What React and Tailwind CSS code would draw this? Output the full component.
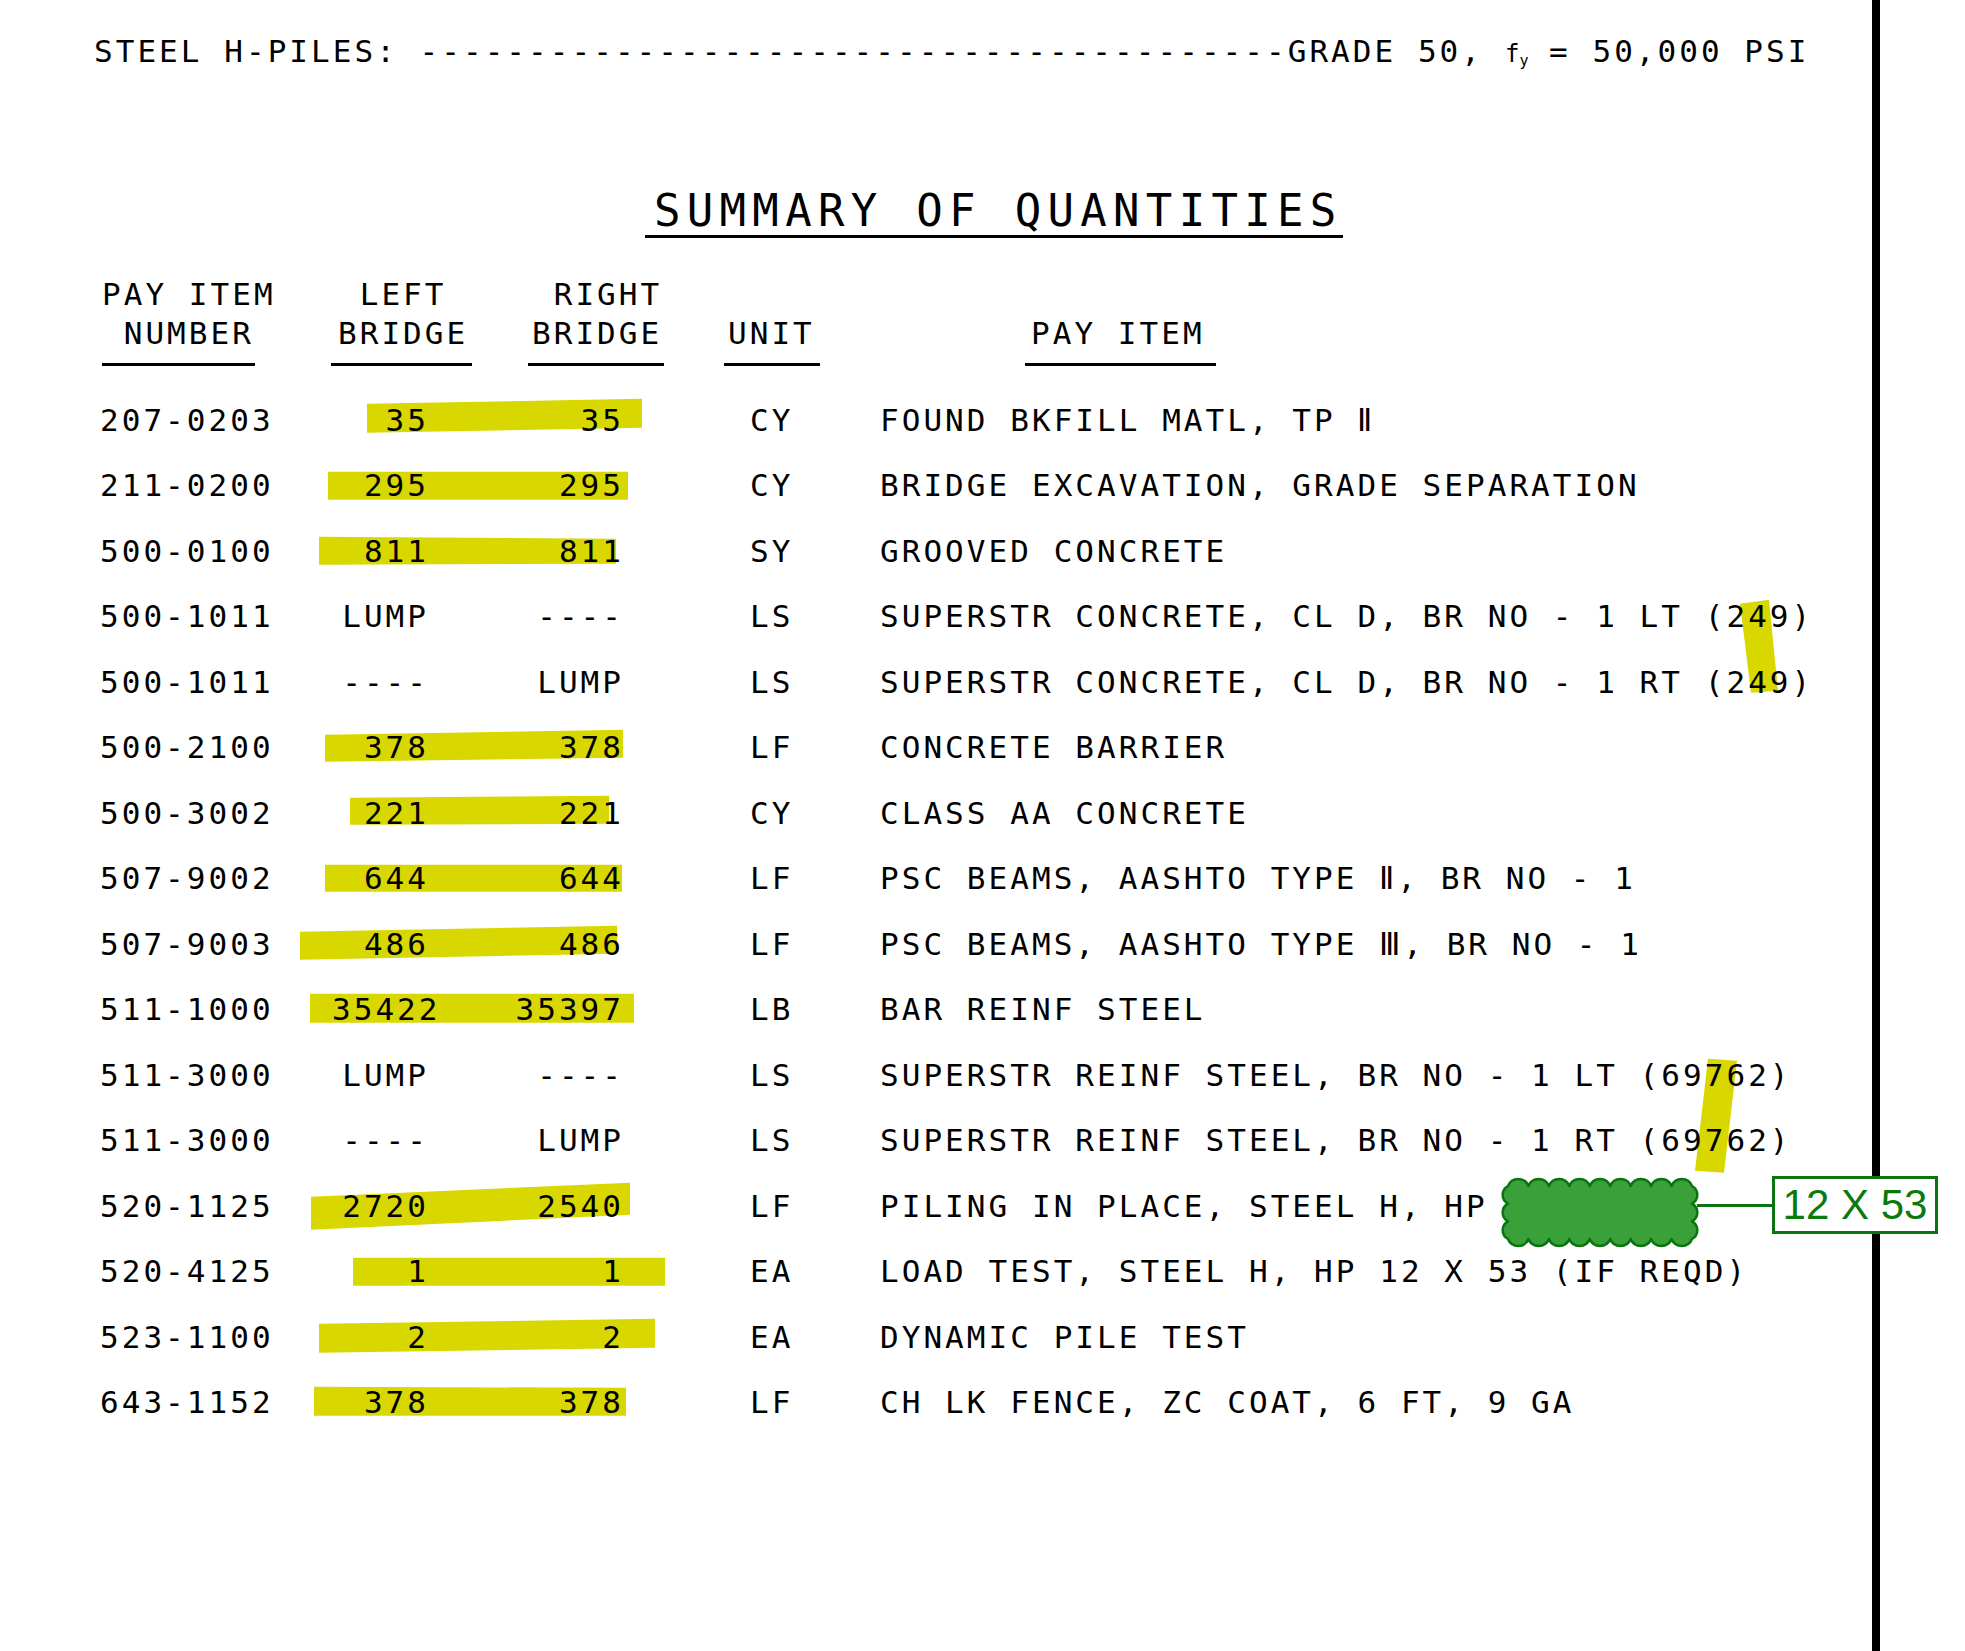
import React from "react";

const rows = [
  ["207-0203", "35", "35", "CY", "FOUND BKFILL MATL, TP Ⅱ"],
  ["211-0200", "295", "295", "CY", "BRIDGE EXCAVATION, GRADE SEPARATION"],
  ["500-0100", "811", "811", "SY", "GROOVED CONCRETE"],
  ["500-1011", "LUMP", "----", "LS", "SUPERSTR CONCRETE, CL D, BR NO - 1 LT (249)"],
  ["500-1011", "----", "LUMP", "LS", "SUPERSTR CONCRETE, CL D, BR NO - 1 RT (249)"],
  ["500-2100", "378", "378", "LF", "CONCRETE BARRIER"],
  ["500-3002", "221", "221", "CY", "CLASS AA CONCRETE"],
  ["507-9002", "644", "644", "LF", "PSC BEAMS, AASHTO TYPE Ⅱ, BR NO - 1"],
  ["507-9003", "486", "486", "LF", "PSC BEAMS, AASHTO TYPE Ⅲ, BR NO - 1"],
  ["511-1000", "35422", "35397", "LB", "BAR REINF STEEL"],
  ["511-3000", "LUMP", "----", "LS", "SUPERSTR REINF STEEL, BR NO - 1 LT (69762)"],
  ["511-3000", "----", "LUMP", "LS", "SUPERSTR REINF STEEL, BR NO - 1 RT (69762)"],
  ["520-1125", "2720", "2540", "LF", "PILING IN PLACE, STEEL H, HP 12 X 53"],
  ["520-4125", "1", "1", "EA", "LOAD TEST, STEEL H, HP 12 X 53 (IF REQD)"],
  ["523-1100", "2", "2", "EA", "DYNAMIC PILE TEST"],
  ["643-1152", "378", "378", "LF", "CH LK FENCE, ZC COAT, 6 FT, 9 GA"],
];

// highlighter marks, x in page px, y offset from the row's middle (row is 65.5 tall)
// [x1, x2, topLeft, topRight, bottomRight, bottomLeft]
const marks = {
  0: [367, 642, -16, -21, 8, 13],
  1: [328, 628, -14, -14, 14, 14],
  2: [319, 616, -14, -12, 13, 14],
  5: [325, 623, -13, -18, 10, 14],
  6: [350, 609, -15, -17, 11, 12],
  7: [325, 622, -14, -14, 13, 13],
  8: [300, 617, -12, -18, 10, 16],
  9: [310, 634, -16, -16, 13, 13],
  12: [311, 630, -9, -23, 9, 24],
  13: [353, 665, -14, -14, 14, 14],
  14: [319, 655, -13, -18, 11, 16],
  15: [314, 626, -16, -15, 13, 13],
};

// slanted strokes that run down across two rows
const strokes = {
  3: "1740,-13 1769,-17 1778,74 1751,76",
  10: "1708,-16 1737,-14 1724,98 1695,96",
};

const MID = 32.75;

function cloudPath(x0, y0, x1, y1, nx, ny, rh, rv) {
  const dx = (x1 - x0) / nx;
  const dy = (y1 - y0) / ny;
  let d = `M${x0},${y0}`;
  for (let i = 1; i <= nx; i++) d += ` A${rh},${rh} 0 0 1 ${x0 + dx * i},${y0}`;
  for (let j = 1; j <= ny; j++) d += ` A${rv},${rv} 0 0 1 ${x1},${y0 + dy * j}`;
  for (let i = 1; i <= nx; i++) d += ` A${rh},${rh} 0 0 1 ${x1 - dx * i},${y1}`;
  for (let j = 1; j <= ny; j++) d += ` A${rv},${rv} 0 0 1 ${x0},${y1 - dy * j}`;
  return d + " Z";
}

const Callout = () => (
  <>
    <svg className="absolute left-[1500px] top-[4px]" width="200" height="71" viewBox="0 0 200 71">
      <path d={cloudPath(8, 9, 192, 62, 9, 3, 11, 10)} fill="#3aa13a" stroke="#0a7410" strokeWidth="2.5" strokeLinejoin="round" />
    </svg>
    <div className="absolute left-[1697px] top-[31px] h-[3px] w-[76px] bg-[#0a7410]" />
    <div className="absolute left-[1772px] top-[3px] flex h-[58px] w-[166px] items-center justify-center border-[3px] border-[#0a7410] bg-white font-['Liberation_Sans',Arial,sans-serif] text-[42px] leading-none tracking-normal text-[#0a7a0a]">
      12 X 53
    </div>
  </>
);

function Row({ r, i }) {
  const m = marks[i];
  return (
    <div className="relative grid h-[65.5px] grid-cols-[232px_97px_195px_256px_1fr] items-center pl-[100px]">
      <svg className="absolute left-0 top-0 overflow-visible" width="1" height="1">
        {m && (
          <polygon
            fill="#d8d800"
            points={`${m[0]},${MID + m[2]} ${m[1]},${MID + m[3]} ${m[1]},${MID + m[4]} ${m[0]},${MID + m[5]}`}
          />
        )}
        {strokes[i] && (
          <polygon
            fill="#d8d800"
            points={strokes[i]
              .split(" ")
              .map((p) => {
                const [x, y] = p.split(",").map(Number);
                return `${x},${MID + y}`;
              })
              .join(" ")}
          />
        )}
      </svg>
      <span className="relative">{r[0]}</span>
      <span className="relative text-right">{r[1]}</span>
      <span className="relative text-right">{r[2]}</span>
      <span className="relative pl-[126px]">{r[3]}</span>
      <span className="relative">{r[4]}</span>
      {i === 12 && <Callout />}
    </div>
  );
}

const heads = [
  { cls: "w-[153px]", pad: "pl-0", lines: ["PAY ITEM", " NUMBER"] },
  { cls: "ml-[76px] w-[141px]", pad: "pl-[7px]", lines: [" LEFT", "BRIDGE"] },
  { cls: "ml-[56px] w-[136px]", pad: "pl-[4px]", lines: [" RIGHT", "BRIDGE"] },
  { cls: "ml-[60px] w-[96px]", pad: "pl-[4px]", lines: ["", "UNIT"] },
  { cls: "ml-[205px] w-[191px]", pad: "pl-[6px]", lines: ["", "PAY ITEM"] },
];

export default function App() {
  return (
    <div className="h-[1651px] w-[1965px] overflow-hidden bg-white text-black">
      <div className="h-[1651px] w-[1880px] whitespace-pre border-r-[8px] border-black font-['DejaVu_Sans_Mono',monospace] text-[31px] tracking-[3.04px]">
        {/* top note */}
        <div className="pl-[94px] pt-[36px] leading-[30px]">
          {"STEEL H-PILES: " + "-".repeat(40) + "GRADE 50,"}
          <span className="inline-block w-[66px] pl-[22px] tracking-normal">
            <span className="text-[24px]">f</span>
            <span className="relative top-[4px] text-[15px]">y</span>
          </span>
          {"= 50,000 PSI"}
        </div>

        {/* title */}
        <div className="ml-[645px] mt-[116.5px] w-fit border-b-[3px] border-black pb-[2px] pl-[9px] text-[44px] leading-[44px] tracking-[6.3px]">
          SUMMARY OF QUANTITIES
        </div>

        {/* column heads */}
        <div className="mt-[37px] flex pl-[102px] leading-[39px]">
          {heads.map((h, k) => (
            <div key={k} className={h.cls}>
              {h.lines.map((t, j) => (
                <div key={j} className={`h-[39px] ${h.pad}`}>
                  {t}
                </div>
              ))}
              <div className="mt-[10.5px] h-[3px] bg-black" />
            </div>
          ))}
        </div>

        {/* quantities */}
        <div className="mt-[21.25px] leading-none">
          {rows.map((r, i) => (
            <Row key={i} r={r} i={i} />
          ))}
        </div>
      </div>
    </div>
  );
}
